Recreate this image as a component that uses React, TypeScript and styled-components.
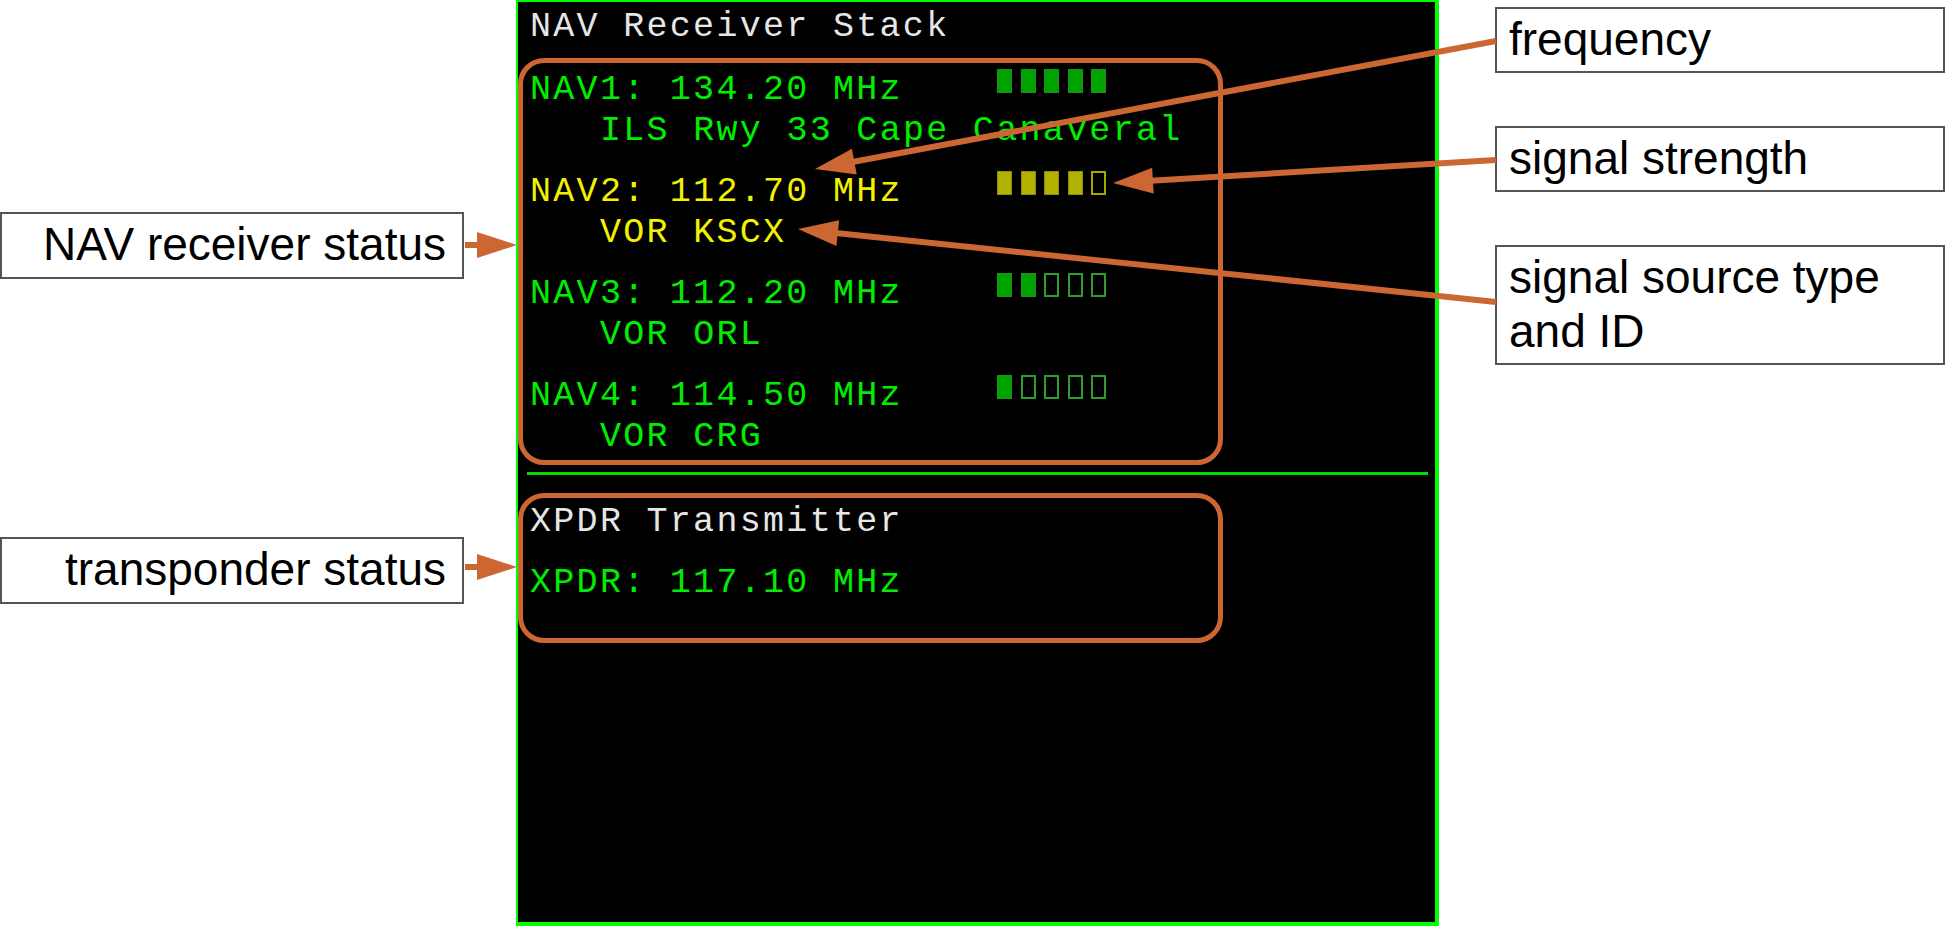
import React from "react";
import styled, { createGlobalStyle } from "styled-components";

const GlobalStyle = createGlobalStyle`
  html, body { margin: 0; padding: 0; background: #ffffff; }
  body { font-family: "Liberation Sans", Arial, sans-serif; }
  * { box-sizing: border-box; }
`;

const ORANGE = "#cc6633";
const GREEN = "#00ee00";
const YELLOW = "#f2f200";
const TITLE = "#e6e6e6";

type Tone = "green" | "yellow";

const Page = styled.div`
  position: relative;
  width: 1946px;
  height: 926px;
  display: flex;
  align-items: flex-start;
  overflow: hidden;
  background: #fff;
`;

const LeftCol = styled.div`
  width: 464px;
  padding-top: 212px;
  display: flex;
  flex-direction: column;
  gap: 258px;
`;

const RightCol = styled.div`
  width: 450px;
  margin-left: 56px;
  padding-top: 7px;
  display: flex;
  flex-direction: column;
  gap: 53px;
`;

const Note = styled.div<{ $align?: "left" | "right" }>`
  border: 2px solid #555;
  background: #fff;
  color: #000;
  font-family: "Liberation Sans", Arial, sans-serif;
  font-size: 46px;
  line-height: 54px;
  padding: ${(p) => (p.$align === "right" ? "3px 16px 6px 12px" : "3px 12px 5px 12px")};
  text-align: ${(p) => p.$align ?? "left"};
  white-space: nowrap;
`;

const Panel = styled.div`
  width: 923px;
  height: 926px;
  margin-left: 52px;
  background: #000;
  border-style: solid;
  border-color: #00ff00;
  border-width: 2px 4px 4px 2px;
  padding-top: 5px;
  display: flex;
  flex-direction: column;
  font-family: "Liberation Mono", "DejaVu Sans Mono", monospace;
  font-size: 35px;
  letter-spacing: 2.3px;
  line-height: 41px;
`;

const Title = styled.div`
  color: ${TITLE};
  padding-left: 12px;
  white-space: pre;
`;

const Callout = styled.div<{ $padTop: number; $padBottom: number; $gap: number }>`
  width: 705px;
  border: 5px solid ${ORANGE};
  border-radius: 26px;
  padding: ${(p) => `${p.$padTop}px 0 ${p.$padBottom}px 7px`};
  display: flex;
  flex-direction: column;
  gap: ${(p) => p.$gap}px;
`;

const NavGroup = styled.div`
  display: flex;
  flex-direction: column;
`;

const Row = styled.div<{ $tone: Tone }>`
  display: flex;
  align-items: flex-start;
  color: ${(p) => (p.$tone === "yellow" ? YELLOW : GREEN)};
  white-space: pre;
`;

const Label = styled.span`
  width: 467px;
  flex: none;
`;

const Source = styled.div<{ $tone: Tone }>`
  color: ${(p) => (p.$tone === "yellow" ? YELLOW : GREEN)};
  padding-left: 70px;
  white-space: pre;
`;

const Bars = styled.span`
  display: flex;
  gap: 8.5px;
  margin-top: -1px;
`;

const Bar = styled.span<{ $on: boolean; $tone: Tone }>`
  width: 15px;
  height: 24px;
  flex: none;
  background: ${(p) =>
    p.$on ? (p.$tone === "yellow" ? "#b2b200" : "#00a400") : "#000"};
  border: ${(p) =>
    p.$on
      ? `1px solid ${p.$tone === "yellow" ? "#8e8e14" : "#2a8a2a"}`
      : `2px solid ${p.$tone === "yellow" ? "#a6a600" : "#2f9c2f"}`};
`;

const Title2 = styled.div`
  color: ${TITLE};
  white-space: pre;
`;

const Separator = styled.div`
  height: 3px;
  background: #00dd00;
  margin: 7px 7px 18px 9px;
`;

const Overlay = styled.svg`
  position: absolute;
  left: 0;
  top: 0;
  pointer-events: none;
`;

const navs: { name: string; freq: string; src: string; strength: number; tone: Tone }[] = [
  { name: "NAV1", freq: "134.20", src: "ILS Rwy 33 Cape Canaveral", strength: 5, tone: "green" },
  { name: "NAV2", freq: "112.70", src: "VOR KSCX", strength: 4, tone: "yellow" },
  { name: "NAV3", freq: "112.20", src: "VOR ORL", strength: 2, tone: "green" },
  { name: "NAV4", freq: "114.50", src: "VOR CRG", strength: 1, tone: "green" },
];

function Arrow({ x1, y1, x2, y2 }: { x1: number; y1: number; x2: number; y2: number }) {
  const dx = x2 - x1;
  const dy = y2 - y1;
  const len = Math.hypot(dx, dy);
  const ux = dx / len;
  const uy = dy / len;
  const L = 40;
  const W = 13;
  const bx = x2 - ux * L;
  const by = y2 - uy * L;
  const nx = -uy;
  const ny = ux;
  const pts = `${x2},${y2} ${bx + nx * W},${by + ny * W} ${bx - nx * W},${by - ny * W}`;
  return (
    <g>
      <line x1={x1} y1={y1} x2={bx + ux * 2} y2={by + uy * 2} stroke={ORANGE} strokeWidth={6} />
      <polygon points={pts} fill={ORANGE} />
    </g>
  );
}

export default function App() {
  return (
    <>
      <GlobalStyle />
      <Page>
        <LeftCol>
          <Note $align="right">NAV receiver status</Note>
          <Note $align="right">transponder status</Note>
        </LeftCol>

        <Panel>
          <Title>NAV Receiver Stack</Title>
          <Callout $padTop={7} $padBottom={2} $gap={20} style={{ marginTop: 10 }}>
            {navs.map((n) => (
              <NavGroup key={n.name}>
                <Row $tone={n.tone}>
                  <Label>{`${n.name}: ${n.freq} MHz`}</Label>
                  <Bars>
                    {[0, 1, 2, 3, 4].map((i) => (
                      <Bar key={i} $on={i < n.strength} $tone={n.tone} />
                    ))}
                  </Bars>
                </Row>
                <Source $tone={n.tone}>{n.src}</Source>
              </NavGroup>
            ))}
          </Callout>
          <Separator />
          <Callout $padTop={4} $padBottom={34} $gap={20}>
            <Title2>XPDR Transmitter</Title2>
            <Row $tone="green">
              <Label>XPDR: 117.10 MHz</Label>
            </Row>
          </Callout>
        </Panel>

        <RightCol>
          <Note>frequency</Note>
          <Note>signal strength</Note>
          <Note>
            signal source type
            <br />
            and ID
          </Note>
        </RightCol>

        <Overlay width={1946} height={926} viewBox="0 0 1946 926">
          <Arrow x1={465} y1={245} x2={517} y2={245} />
          <Arrow x1={465} y1={567} x2={517} y2={567} />
          <Arrow x1={1496} y1={41} x2={815} y2={169} />
          <Arrow x1={1496} y1={160} x2={1113} y2={183} />
          <Arrow x1={1496} y1={302} x2={798} y2={229} />
        </Overlay>
      </Page>
    </>
  );
}
